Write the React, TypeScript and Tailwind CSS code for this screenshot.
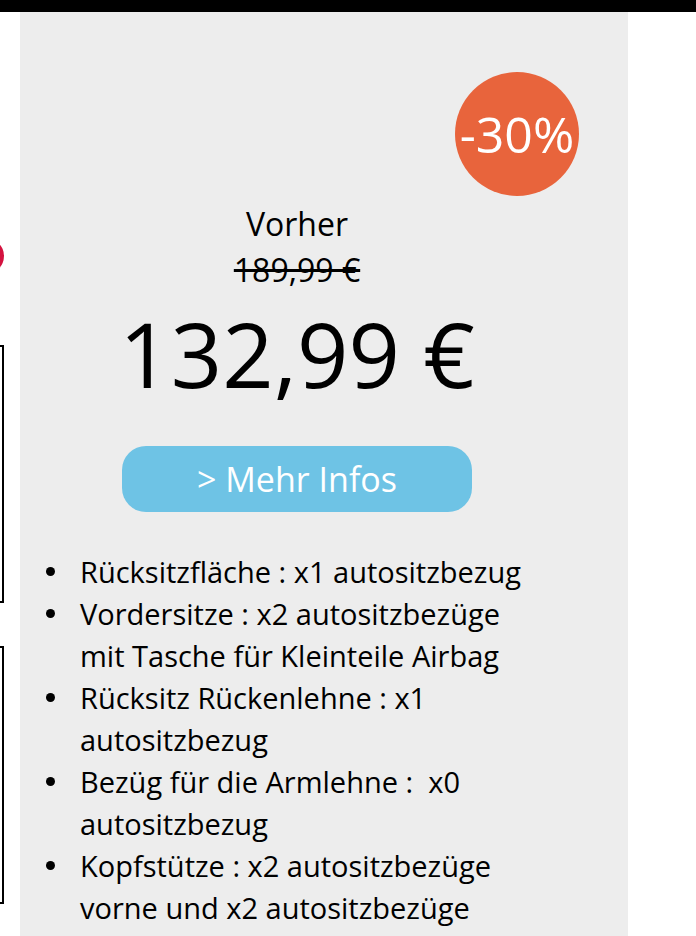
import React from 'react';

const features = [
  'Rücksitzfläche : x1 autositzbezug',
  'Vordersitze : x2 autositzbezüge mit Tasche für Kleinteile Airbag',
  'Rücksitz Rückenlehne : x1 autositzbezug',
  'Bezüg für die Armlehne :\u00a0 x0 autositzbezug',
  'Kopfstütze : x2 autositzbezüge vorne und x2 autositzbezüge hinten',
];

function LeftEdge() {
  // pieces of the neighbouring card that peek in from the left
  return (
    <div className="w-5 shrink-0 overflow-hidden">
      <div className="h-[226px]" />
      <div className="-ml-[32px] h-9 w-9 rounded-full bg-[#d4123f]" />
      <div className="-ml-[196px] mt-[71px] h-[258px] w-[200px] border-2 border-black" />
      <div className="-ml-[196px] mt-[43px] h-[258px] w-[200px] border-2 border-black" />
    </div>
  );
}

function PriceCard() {
  return (
    <div className="relative w-[608px] shrink-0 bg-[#ededed] pl-5 pr-[74px] text-black">
      <div className="absolute left-[435px] top-[60px] flex h-[124px] w-[124px] items-center justify-center rounded-full bg-[#e8643c] text-[50px] leading-none text-white">
        -30%
      </div>

      <div className="flex flex-col items-center pt-[191px]">
        <div className="text-[32px] leading-[42px]">Vorher</div>
        <div className="mt-[4px] text-[32px] leading-[42px] line-through">189,99 €</div>
        <div className="mt-[12px] text-[90px] leading-[100px]">132,99 €</div>
        <button className="mt-[43px] flex h-[66px] w-[350px] items-center justify-center rounded-[24px] bg-[#6ec3e5] text-[34px] text-white">
          &gt; Mehr Infos
        </button>
      </div>

      <ul className="mr-[19px] mt-[39px] text-[29px] leading-[42px]">
        {features.map((f) => (
          <li key={f} className="flex">
            <span className="w-[40px] shrink-0 pl-[6px] pt-[16px]">
              <span className="block h-[9px] w-[9px] rounded-full bg-black" />
            </span>
            <span className="min-w-0 flex-1">{f}</span>
          </li>
        ))}
      </ul>
    </div>
  );
}

export default function App() {
  return (
    <div className="h-[936px] overflow-hidden bg-white font-['Open_Sans',sans-serif]">
      <div className="h-3 bg-black" />
      <div className="flex">
        <LeftEdge />
        <PriceCard />
        <div className="flex-1" />
      </div>
    </div>
  );
}
